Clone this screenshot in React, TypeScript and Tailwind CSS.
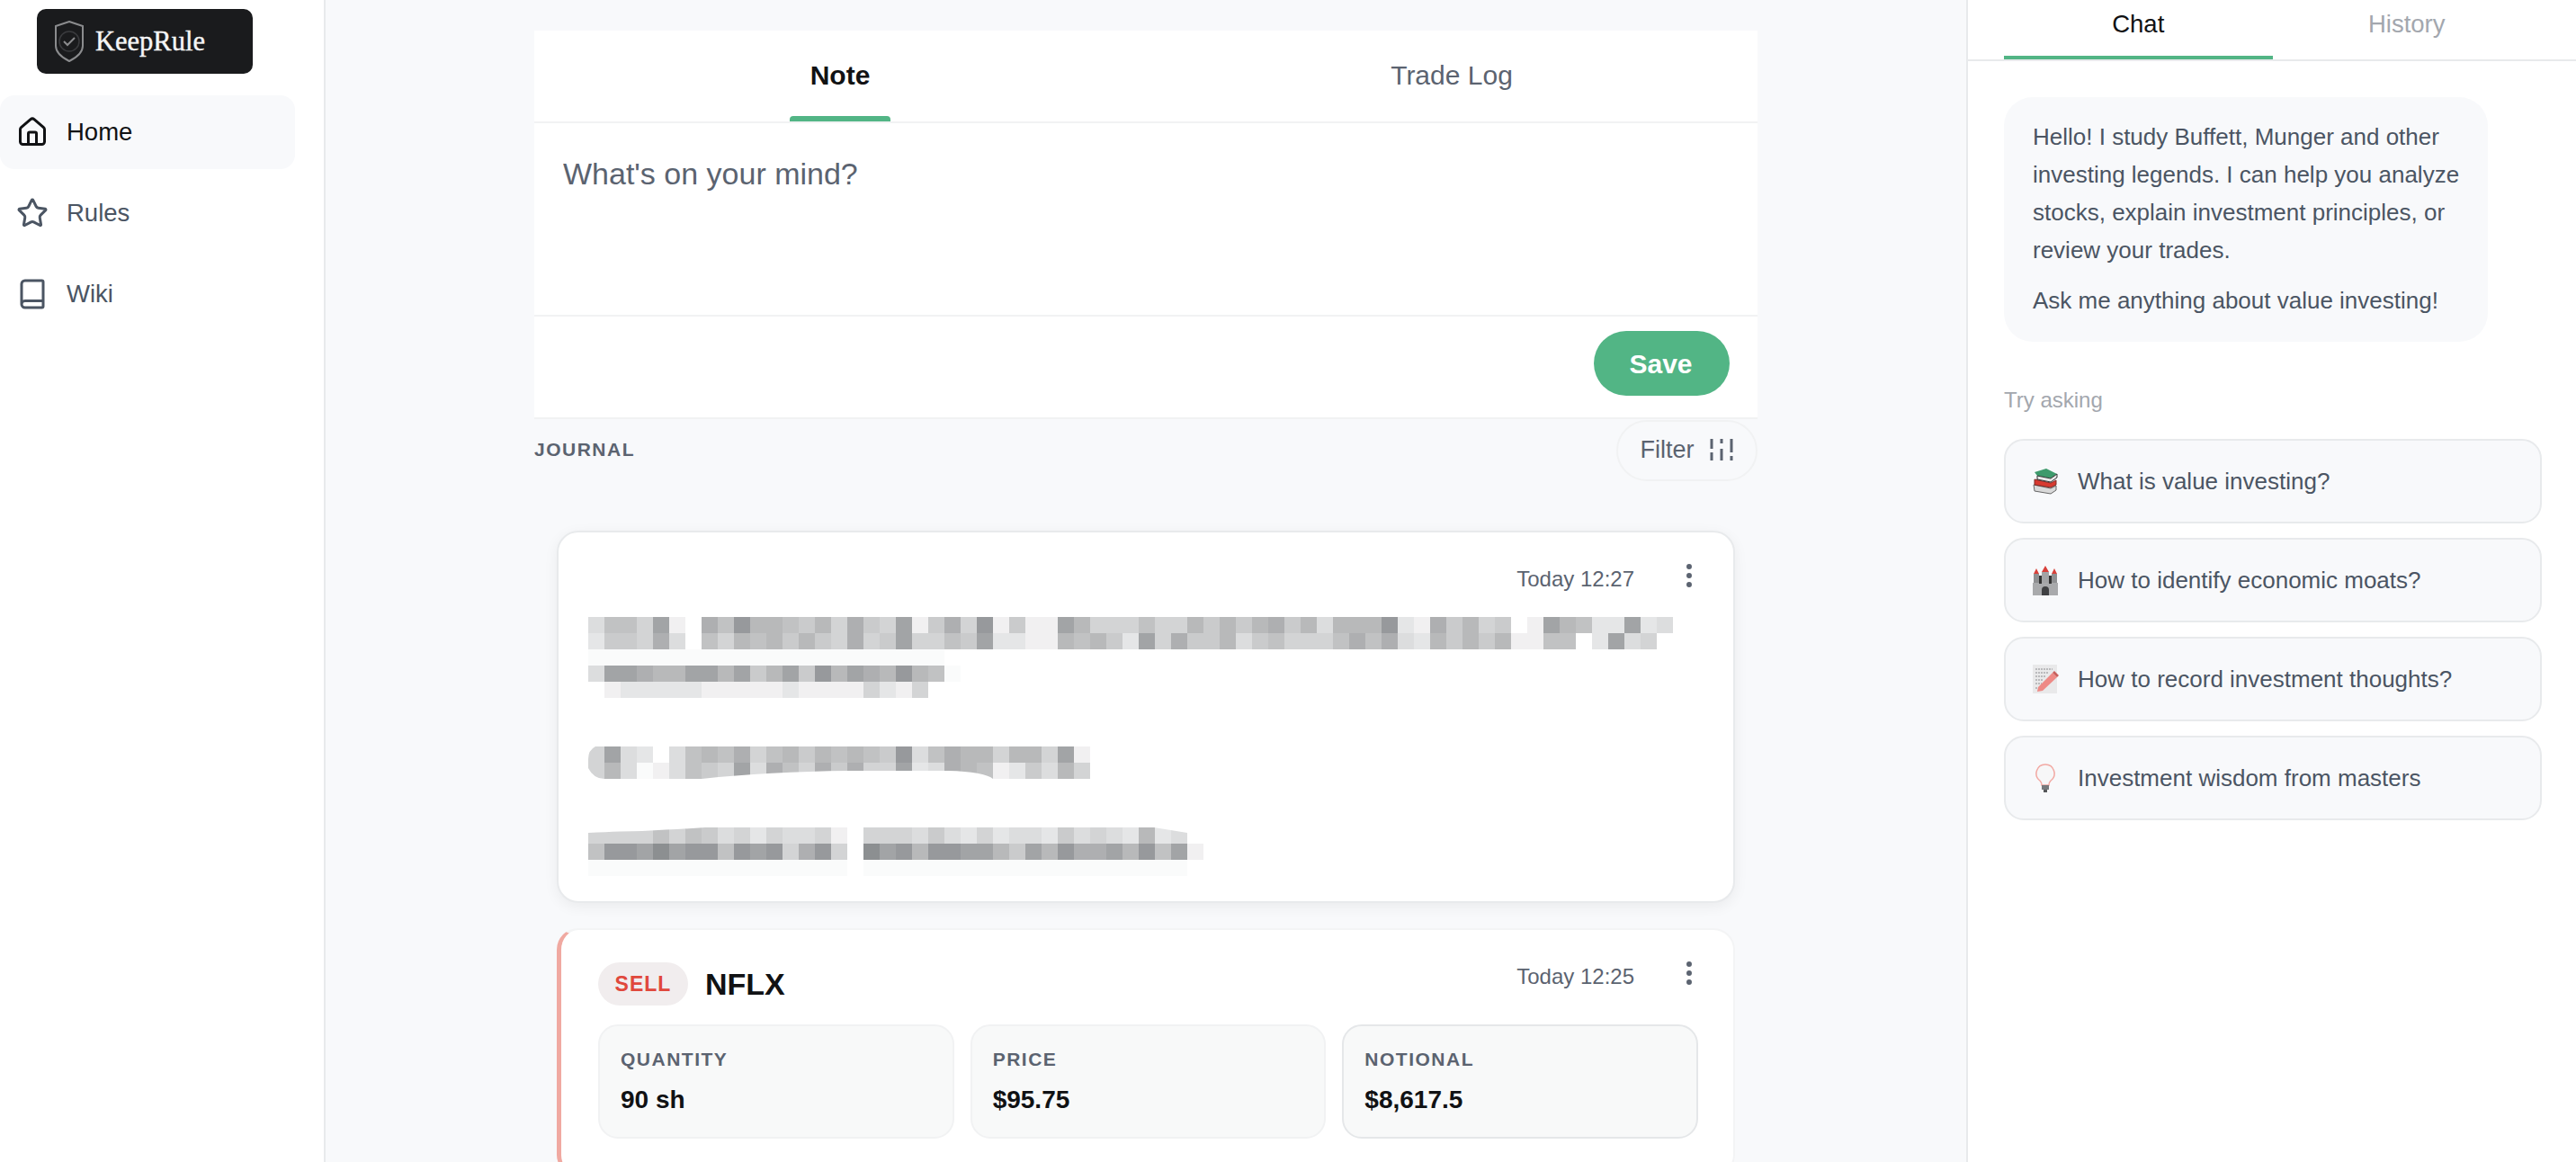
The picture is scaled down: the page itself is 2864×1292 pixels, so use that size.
import React from 'react';
import { Book, EllipsisVertical, House, Star } from 'lucide-react';

const shades: Record<string, string> = {
  w: '#fafbfb',
  '0': '#f1f0f1',
  '1': '#e5e6e7',
  '2': '#dcddde',
  '3': '#d3d4d5',
  '4': '#cacbcc',
  '5': '#c1c2c3',
  '6': '#b8b9ba',
  '7': '#aeafb1',
  '8': '#a2a4a6',
  '9': '#97999c',
  x: '#8c8f91',
};

// redacted note text: one string per row of 18px cells, y from the top of the block
const rows: { y: number; cells: string }[] = [
  { y: 0, cells: '255380.75966546374380473904008633353364646746266691074634.086511812' },
  { y: 18, cells: '144372.536564643734833548110065641837446245333575721646460055.1823' + '' },
  { y: 36, cells: 'wwwwwwwwwwwwwwwwwwwwww' },
  { y: 54, cells: '2887668868468496876965w' },
  { y: 72, cells: '.01111100000100003103' },
  { y: 144, cells: '3821.25657356465654925766366380' },
  { y: 162, cells: '362w02543827537473381276501426' + '3' },
  { y: 234, cells: '3333535423132230.33324213122142321612' },
  { y: 252, cells: '5998x89959893793.x89699886486977869580' },
  { y: 270, cells: 'wwwwwwwwwwwwwwww.wwwwwwwwwwwwwwwwwwww' },
];

const Mosaic = () => (
  <svg width={1208} height={288} viewBox="0 0 1208 288" className="block" aria-hidden="true">
    {rows.map((row) =>
      row.cells.split('').map((c, i) =>
        shades[c] ? <rect key={`${row.y}-${i}`} x={i * 18} y={row.y} width={18} height={18} fill={shades[c]} /> : null,
      ),
    )}
    <g fill="#ffffff">
      <path d="M126 180Q200 172 290 171L400 171Q440 172 450 180Z" />
      <path d="M0 144h8q-8 4-8 14z" />
      <path d="M0 180h18q-12 0-18-12z" />
      <path d="M0 234V240Q40 238 60 238Q100 236 130 234Z" />
      <path d="M629 234L666 240V234Z" />
      <path d="M0 90h12q-10-2-12-12z" />
    </g>
  </svg>
);

const BooksEmoji = () => (
  <svg width="32" height="32" viewBox="0 0 32 32">
    <path d="M3 20l19 4 6-3v5l-6 4-18-3z" fill="#d9d9d9" stroke="#666" strokeWidth="1" />
    <path d="M4 14l18 4 6-3v5l-6 3-18-3z" fill="#d83a30" stroke="#7c2b26" strokeWidth="1" />
    <path d="M4 6l13-4 12 6-7 5-15-3z" fill="#3e9a6c" />
    <path d="M7 10l15 3 7-5v4l-7 5-15-3z" fill="#e8e8e8" stroke="#333" strokeWidth="1" />
  </svg>
);

const CastleEmoji = () => (
  <svg width="32" height="34" viewBox="0 0 32 34">
    <rect x="3" y="10" width="6" height="24" fill="#8f9092" />
    <rect x="23" y="10" width="6" height="24" fill="#8f9092" />
    <rect x="12" y="8" width="8" height="14" fill="#a3a4a6" />
    <rect x="2" y="20" width="28" height="14" fill="#a9aaac" />
    <path d="M3 10l3-6 3 6zM23 10l3-6 3 6zM12 8l4-7 4 7z" fill="#d8403a" />
    <path d="M12 34v-6a4 4 0 0 1 8 0v6z" fill="#3f4042" />
    <rect x="9" y="12" width="3" height="9" fill="#333" />
    <rect x="20" y="12" width="3" height="9" fill="#333" />
  </svg>
);

const MemoEmoji = () => (
  <svg width="30" height="32" viewBox="0 0 30 32">
    <rect x="1" y="0" width="27" height="32" fill="#e9e9ea" />
    <path d="M4 5h19M4 9h15M4 13h12M4 17h9M4 21h7M4 26h6" stroke="#8b8b8d" strokeWidth="1.2" strokeDasharray="2 1" />
    <path d="M7 25L23 9l5 5-16 15-6 1z" fill="#ee8a86" />
    <path d="M23 9l2-2 5 5-2 2z" fill="#c9605c" />
  </svg>
);

const BulbEmoji = () => (
  <svg width="22" height="32" viewBox="0 0 22 32">
    <path d="M11 1a10 10 0 0 0-6 18c1.500 1.500 2 3 2 5h8c0-2 .5-3.500 2-5a10 10 0 0 0-6-18z" fill="#f7f7f8" stroke="#f2a9a3" strokeWidth="1.500" />
    <rect x="7" y="24" width="8" height="5" fill="#77797c" />
    <rect x="9" y="29" width="4" height="3" fill="#55575a" />
  </svg>
);

const navItems = [
  { label: 'Home', icon: House, active: true },
  { label: 'Rules', icon: Star, active: false },
  { label: 'Wiki', icon: Book, active: false },
];

const suggestions = [
  { icon: <BooksEmoji />, text: 'What is value investing?' },
  { icon: <CastleEmoji />, text: 'How to identify economic moats?' },
  { icon: <MemoEmoji />, text: 'How to record investment thoughts?' },
  { icon: <BulbEmoji />, text: 'Investment wisdom from masters' },
];

const stats = [
  { label: 'QUANTITY', value: '90 sh', border: 'border-[#f1f2f3]' },
  { label: 'PRICE', value: '$95.75', border: 'border-[#f1f2f3]' },
  { label: 'NOTIONAL', value: '$8,617.5', border: 'border-[#e5e7e9]' },
];

const CardMeta = ({ time }: { time: string }) => (
  <div className="flex items-start gap-[44px]">
    <span className="mt-[7px] text-[24px] leading-[27px] text-[#5b6370]">{time}</span>
    <EllipsisVertical size={34} strokeWidth={2.2} className="text-[#5b6370]" />
  </div>
);

export default function App() {
  return (
    <div className="flex h-screen overflow-hidden bg-white font-['Liberation_Sans',Arial,sans-serif]">
      <aside className="w-[362px] shrink-0 border-r-2 border-[#e8eaec] bg-white">
        <div className="ml-[41px] mt-[10px] flex h-[72px] w-[240px] items-center gap-[13px] rounded-[10px] bg-[#1a1b1d] pl-[20px]">
          <svg width="32" height="46" viewBox="0 0 32 46" fill="none" stroke="#8b8c8e" strokeWidth="2">
            <path d="M16 1l15 5v22c0 7-7 13-15 17C8 41 1 35 1 28V6z" />
            <circle cx="16" cy="23" r="11" stroke="#3a3b3e" strokeWidth="1.500" />
            <path d="M10 23l4 4 8-8" stroke="#8b8c8e" />
          </svg>
          <span className="font-['Liberation_Serif',serif] text-[30.5px] leading-none text-[#f5f5f5] [-webkit-text-stroke:0.4px_#f5f5f5]">
            KeepRule
          </span>
        </div>
        <nav className="mt-[24px] flex flex-col gap-[8px]">
          {navItems.map((item) => {
            const Icon = item.icon;
            return (
              <div
                key={item.label}
                className={`flex h-[82px] w-[328px] items-center gap-[20px] rounded-[16px] pl-[18px] ${
                  item.active ? 'bg-[#f8f9fb] text-[#111214]' : 'text-[#4b5563]'
                }`}
              >
                <Icon size={36} strokeWidth={2} />
                <span className="text-[27.5px]">{item.label}</span>
              </div>
            );
          })}
        </nav>
      </aside>

      <main className="min-w-0 flex-1 bg-[#f8f9fb] pt-[34px]">
        <div className="mx-auto w-[1360px]">
          <section className="border-b-2 border-[#f1f2f3] bg-white">
            <div className="flex h-[103px] border-b-2 border-[#f1f2f3]">
              <div className="relative flex flex-1 items-center justify-center pb-[2px] text-[30px] font-bold text-[#111214]">
                Note
                <span className="absolute bottom-0 h-[6px] w-[112px] rounded-t-[4px] bg-[#52b585]" />
              </div>
              <div className="flex flex-1 items-center justify-center pb-[2px] text-[30px] text-[#5b6370]">Trade Log</div>
            </div>
            <div className="h-[215px] border-b-2 border-[#f1f2f3] px-[32px] pt-[34px]">
              <textarea
                placeholder="What's on your mind?"
                className="h-[48px] w-full resize-none bg-transparent text-[34px] leading-[44px] outline-none placeholder:text-[#5b6370]"
              />
            </div>
            <div className="flex h-[112px] items-start justify-end pr-[31px] pt-[16px]">
              <button
                type="button"
                className="h-[72px] w-[151px] rounded-full bg-[#52b585] pr-[2px] text-[30px] font-bold text-white"
              >
                Save
              </button>
            </div>
          </section>

          <div className="flex h-[70px] items-center justify-between">
            <span className="pb-[2px] text-[21px] font-bold tracking-[1.5px] text-[#5b6370]">JOURNAL</span>
            <div className="flex h-[68px] w-[157px] items-center justify-center gap-[16px] rounded-full border-2 border-[#f1f2f3] pb-[2px] text-[27px] text-[#5b6370]">
              Filter
              <svg width="28" height="24" viewBox="0 0 28 24" stroke="#5b6370" strokeWidth="3">
                <path d="M3 0v11M3 15v9M14 0v5M14 11v13M25 0v15M25 19v5" />
              </svg>
            </div>
          </div>

          <div className="mx-[25px] mt-[54px] flex flex-col gap-[28px]">
            <article className="rounded-[24px] border-2 border-[#e8eaec] bg-white pb-[28px] pl-[33px] pr-[32px] pt-[31px] shadow-[0_4px_16px_rgba(0,0,0,0.06)]">
              <div className="flex justify-end">
                <CardMeta time="Today 12:27" />
              </div>
              <div className="mt-[29px]">
                <Mosaic />
              </div>
            </article>

            <article className="rounded-[24px] border-2 border-l-[5px] border-[#f3f4f5] border-l-[#f0a9a1] bg-white pb-[40px] pl-[41px] pr-[39px] pt-[31px]">
              <div className="flex items-start justify-between">
                <div className="mt-[5px] flex items-center gap-[19px]">
                  <span className="flex h-[48px] w-[100px] items-center justify-center rounded-full bg-[#f1edee] text-[23px] font-bold tracking-[1px] text-[#e0483c]">
                    SELL
                  </span>
                  <span className="text-[34px] font-bold leading-[48px] text-[#111214]">NFLX</span>
                </div>
                <div className="mr-[-7px]">
                  <CardMeta time="Today 12:25" />
                </div>
              </div>
              <div className="mt-[21px] grid grid-cols-3 gap-[18px]">
                {stats.map((s) => (
                  <div
                    key={s.label}
                    className={`h-[127px] rounded-[22px] border-2 bg-[#f8f9f9] pl-[23px] pt-[24px] ${s.border}`}
                  >
                    <div className="text-[21px] font-bold leading-[26px] tracking-[1.5px] text-[#5b6370]">{s.label}</div>
                    <div className="mt-[14px] text-[28px] font-bold leading-[36px] text-[#111214]">{s.value}</div>
                  </div>
                ))}
              </div>
            </article>
          </div>
        </div>
      </main>

      <aside className="w-[678px] shrink-0 border-l-2 border-[#e8eaec] bg-white">
        <div className="flex h-[68px] border-b-2 border-[#e8eaec] pl-[40px] pr-[39px] text-[27.5px]">
          <div className="relative flex h-[66px] flex-1 items-center justify-center pb-[13px] text-[#111214]">
            Chat
            <span className="absolute bottom-0 left-0 right-0 h-[4px] bg-[#52b585]" />
          </div>
          <div className="flex h-[66px] flex-1 items-center justify-center pb-[13px] text-[#a3a7ae]">History</div>
        </div>
        <div className="px-[40px] pt-[40px]">
          <div className="w-[538px] rounded-[32px] bg-[#f8f9fb] pb-[25px] pl-[32px] pr-[20px] pt-[23px] text-[26px] leading-[42px] text-[#4b5563]">
            <p>Hello! I study Buffett, Munger and other investing legends. I can help you analyze stocks, explain investment principles, or review your trades.</p>
            <p className="mt-[14px]">Ask me anything about value investing!</p>
          </div>
          <div className="mt-[50px] text-[24px] leading-[30px] text-[#a3a7ae]">Try asking</div>
          <div className="mt-[28px] flex flex-col gap-[16px]">
            {suggestions.map((s) => (
              <div
                key={s.text}
                className="flex h-[94px] w-[598px] items-center gap-[20px] rounded-[22px] border-2 border-[#e8eaec] bg-[#f8f9fb] pl-[28px] text-[26px] text-[#4b5563]"
              >
                <span className="flex w-[32px] justify-center">{s.icon}</span>
                {s.text}
              </div>
            ))}
          </div>
        </div>
      </aside>
    </div>
  );
}
